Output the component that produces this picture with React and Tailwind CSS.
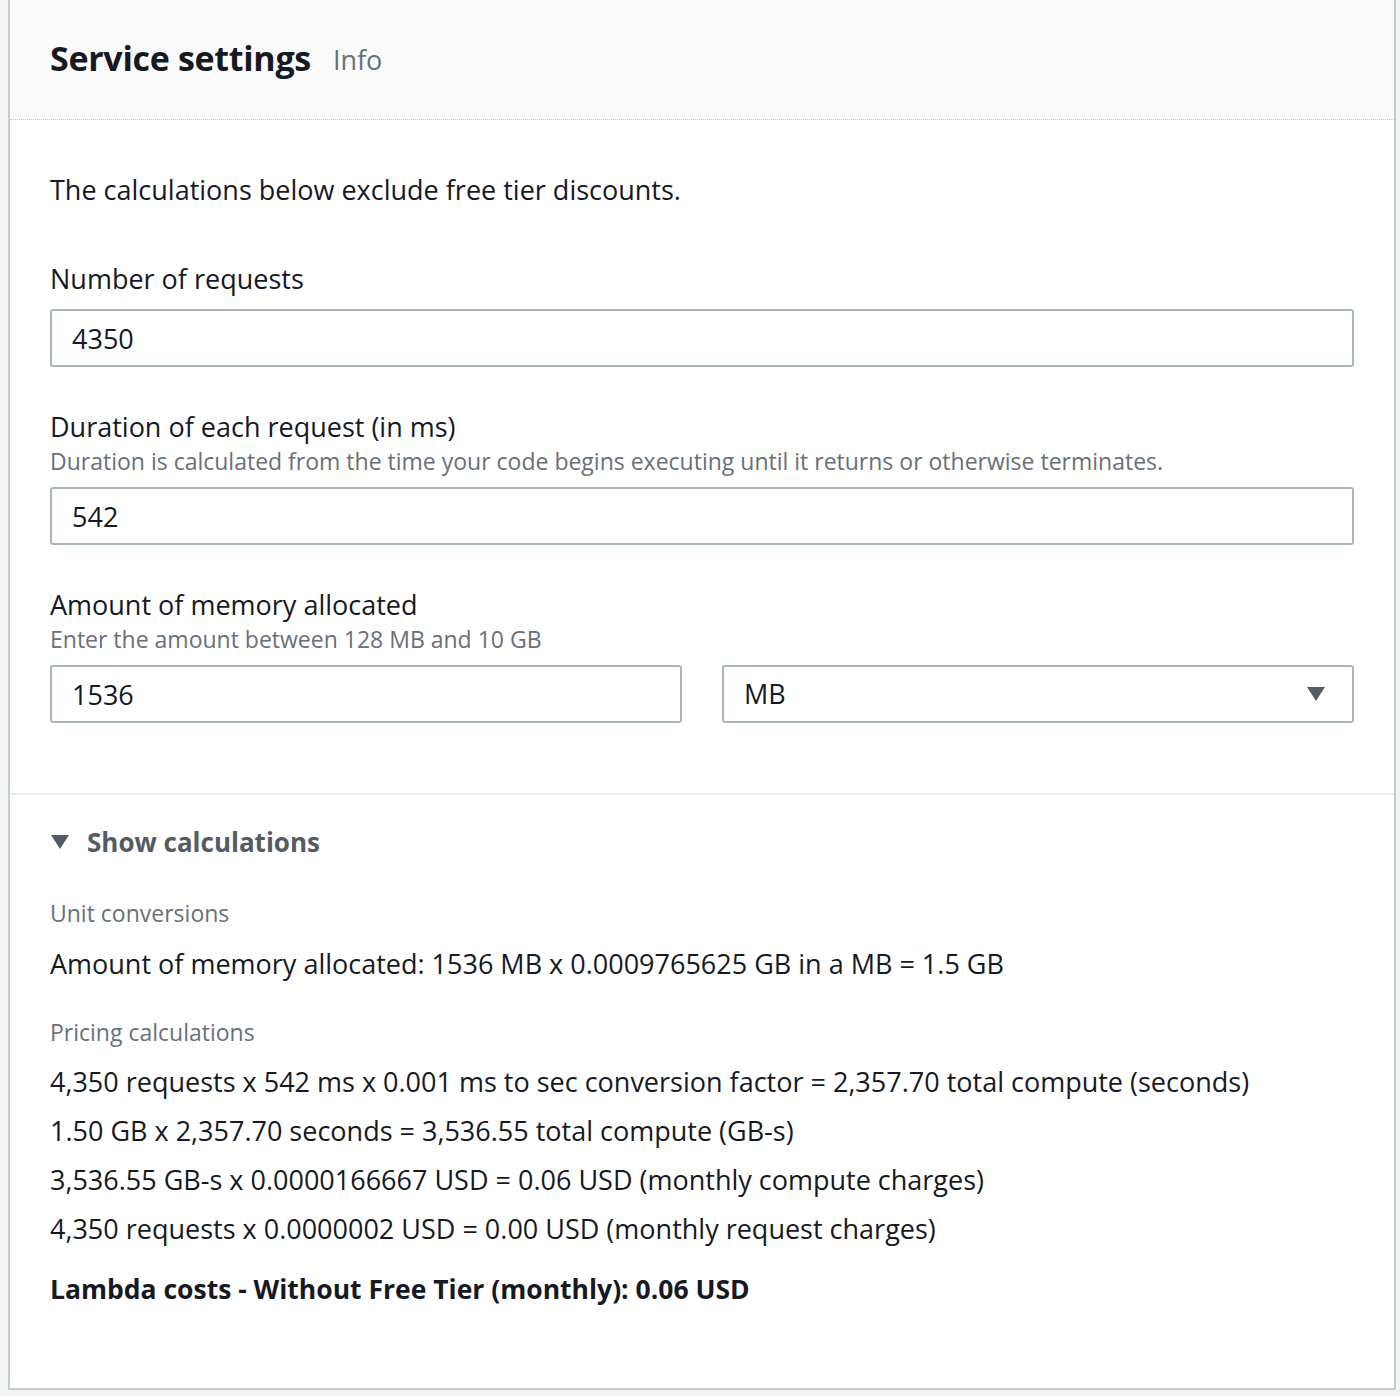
import React from "react";

const Field = ({ label, desc, children }) => (
  <div className="flex flex-col">
    <div className="text-[27px] leading-[36px] text-[#16191f]">{label}</div>
    {desc && <div className="mt-[3px] text-[23px] leading-[27px] text-[#687078]">{desc}</div>}
    <div className="mt-[12px]">{children}</div>
  </div>
);

const Input = ({ value }) => (
  <div className="h-[58px] border-2 border-[#aab7b8] rounded-[3px] bg-white flex items-center px-[20px] pt-[3px] text-[27px] text-[#16191f]">
    {value}
  </div>
);

export default function App() {
  const lines = [
    "4,350 requests x 542 ms x 0.001 ms to sec conversion factor = 2,357.70 total compute (seconds)",
    "1.50 GB x 2,357.70 seconds = 3,536.55 total compute (GB-s)",
    "3,536.55 GB-s x 0.0000166667 USD = 0.06 USD (monthly compute charges)",
    "4,350 requests x 0.0000002 USD = 0.00 USD (monthly request charges)",
  ];

  return (
    <div className="w-[1400px] h-[1396px] bg-[#f2f3f3] pl-[8px] pr-[4px] pb-[6px] font-['Open_Sans',sans-serif]">
      <div className="h-full bg-white border-l-2 border-r-2 border-b-2 border-[#c6cbcb] flex flex-col">
        <div className="h-[120px] bg-[#fafafa] border-b border-dotted border-[#c6cbcb] flex items-center px-[40px] pb-[2px]">
          <span className="text-[34px] font-bold text-[#16191f] tracking-[-0.3px]">Service settings</span>
          <span className="ml-[22px] mt-[4px] text-[27px] text-[#687078]">Info</span>
        </div>

        <div className="px-[40px] pt-[52px] pb-[70px] border-b-2 border-[#eaeded]">
          <div className="text-[27px] leading-[36px] text-[#16191f]">The calculations below exclude free tier discounts.</div>

          <div className="mt-[53px] flex flex-col gap-[42px]">
            <Field label="Number of requests">
              <Input value="4350" />
            </Field>
            <Field
              label="Duration of each request (in ms)"
              desc="Duration is calculated from the time your code begins executing until it returns or otherwise terminates."
            >
              <Input value="542" />
            </Field>
            <Field label="Amount of memory allocated" desc="Enter the amount between 128 MB and 10 GB">
              <div className="grid grid-cols-2 gap-[40px]">
                <Input value="1536" />
                <div className="h-[58px] border-2 border-[#aab7b8] rounded-[3px] bg-white flex items-center justify-between pl-[20px] pr-[26px] text-[27px] text-[#16191f]">
                  <span>MB</span>
                  <svg width="20" height="16" viewBox="0 0 20 16">
                    <polygon points="1,1 19,1 10,15" fill="#545b64" />
                  </svg>
                </div>
              </div>
            </Field>
          </div>
        </div>

        <div className="px-[40px] pt-[29px]">
          <div className="flex items-center h-[36px]">
            <svg width="20" height="16" viewBox="0 0 20 16" className="mr-[17px]">
              <polygon points="1,1 19,1 10,15" fill="#545b64" />
            </svg>
            <span className="text-[26px] font-bold text-[#545b64]">Show calculations</span>
          </div>

          <div className="mt-[36px] text-[23px] leading-[34px] text-[#687078]">Unit conversions</div>
          <div className="mt-[16px] text-[27px] leading-[36px] text-[#16191f]">
            Amount of memory allocated: 1536 MB x 0.0009765625 GB in a MB = 1.5 GB
          </div>

          <div className="mt-[33px] text-[23px] leading-[34px] text-[#687078]">Pricing calculations</div>
          <div className="mt-[15px] flex flex-col gap-[13px]">
            {lines.map((l) => (
              <div key={l} className="text-[27px] leading-[36px] text-[#16191f]">{l}</div>
            ))}
          </div>
          <div className="mt-[24px] text-[26.5px] leading-[36px] font-bold text-[#16191f]">
            Lambda costs - Without Free Tier (monthly): 0.06 USD
          </div>
        </div>
      </div>
    </div>
  );
}
